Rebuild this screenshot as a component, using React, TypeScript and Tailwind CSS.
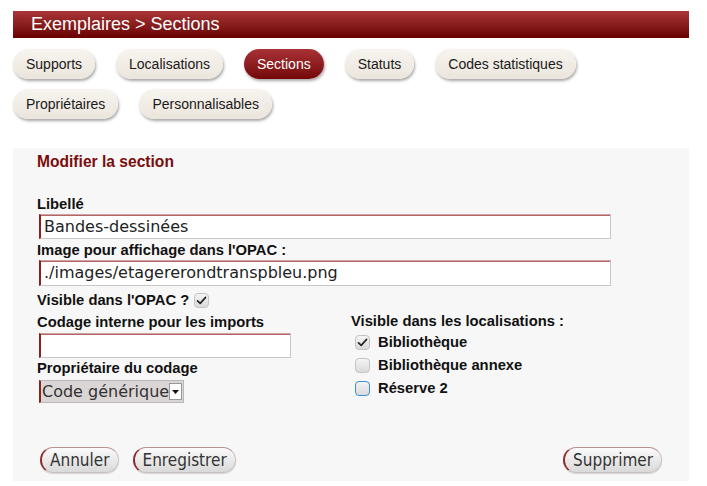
import React from "react";

const tabBase =
  "h-[30px] px-[13px] rounded-full text-[14px] leading-[30px] whitespace-nowrap shadow-[1px_2px_3px_rgba(0,0,0,0.35)]";
const tabIdle = tabBase + " bg-gradient-to-b from-[#f7f4ef] to-[#ebe5dc] text-[#1a1a1a]";
const tabActive = tabBase + " bg-gradient-to-b from-[#a83236] to-[#740606] text-white";

const label = "text-[14.75px] leading-[17px] font-bold text-[#111]";

function Check() {
  return (
    <svg width="11" height="9" viewBox="0 0 11 9" className="block">
      <path d="M1.5 4.8 L4.2 7.4 L9.6 1.4" fill="none" stroke="#222" strokeWidth="1.6" strokeLinecap="round" strokeLinejoin="round" />
    </svg>
  );
}

function Box({ checked, focus }: { checked?: boolean; focus?: boolean }) {
  return (
    <div
      className={
        "w-[15px] h-[15px] rounded-[4px] flex items-center justify-center bg-gradient-to-b from-[#f4f4f4] to-[#dadada] " +
        (focus ? "border border-[#3d8fd6]" : "border border-[#c4c4c4]")
      }
    >
      {checked ? <Check /> : null}
    </div>
  );
}

const inputCls =
  "h-[25px] bg-white border border-[#cbc7c7] border-t-[#c8a4a4] border-l-2 border-l-[#8a2222] shadow-[inset_0_1px_0_#b86464] pl-[3px] text-[16px] leading-[24px] text-[#222] font-['DejaVu_Sans',sans-serif]";

const btnCls =
  "h-[26px] px-[8px] rounded-full bg-gradient-to-b from-[#fbfbfb] to-[#d9d9d9] border border-[#c9c0c0] border-t-[#b99292] border-l-2 border-l-[#8e2a2a] text-[17px] leading-[22px] text-[#333] font-['DejaVu_Sans_Condensed','DejaVu_Sans',sans-serif] shadow-[0_1px_1px_rgba(0,0,0,0.15)]";

export default function App() {
  return (
    <div className="w-[707px] h-[486px] bg-white font-['Liberation_Sans',Arial,sans-serif] pt-[11px] px-[13px] pr-[18px]">
      <div className="h-[27px] bg-gradient-to-b from-[#aa3538] to-[#690000] text-white text-[18px] leading-[27px] pl-[18px]">
        Exemplaires &gt; Sections
      </div>

      <div className="mt-[11px] flex gap-[21px]">
        <div className={tabIdle}>Supports</div>
        <div className={tabIdle}>Localisations</div>
        <div className={tabActive}>Sections</div>
        <div className={tabIdle}>Statuts</div>
        <div className={tabIdle}>Codes statistiques</div>
      </div>
      <div className="mt-[10px] flex gap-[21px]">
        <div className={tabIdle}>Propriétaires</div>
        <div className={tabIdle}>Personnalisables</div>
      </div>

      <div className="mt-[29px] bg-[#f7f7f7] h-[333px] pl-[24px] pr-[27px] pt-[5px]">
        <div className="text-[15.6px] leading-[18px] font-bold text-[#7b0c0c]">Modifier la section</div>

        <div className={"mt-[25px] " + label}>Libellé</div>
        <div className={inputCls + " ml-[2px] mt-[1px] w-[572px]"}>Bandes-dessinées</div>

        <div className={"mt-[3px] " + label}>Image pour affichage dans l'OPAC :</div>
        <div className={inputCls + " ml-[2px] mt-[1px] w-[572px] h-[26px]"}>./images/etagererondtranspbleu.png</div>

        <div className="mt-[6px] flex items-center gap-[5px] h-[16px]">
          <span className={label}>Visible dans l'OPAC ?</span>
          <Box checked />
        </div>

        <div className="flex">
          <div className="w-[314px]">
            <div className={"mt-[6px] " + label}>Codage interne pour les imports</div>
            <div className={inputCls + " ml-[2px] w-[252px] mt-[2px]"}></div>
            <div className={"mt-[2px] " + label}>Propriétaire du codage</div>
            <div className="ml-[2px] mt-[3px] w-[145px] h-[23px] flex items-center bg-[#dad6d6] border border-[#bdb8b8] border-l-2 border-l-[#8a2222]">
              <span className="flex-1 pl-[1px] text-[16px] leading-[20px] text-[#333] font-['DejaVu_Sans',sans-serif] whitespace-nowrap overflow-hidden">
                Code générique
              </span>
              <span className="w-[13px] h-[17px] mr-[1px] bg-white border border-[#999] flex items-center justify-center">
                <svg width="7" height="4" viewBox="0 0 7 4"><path d="M0 0 L7 0 L3.5 4 Z" fill="#111" /></svg>
              </span>
            </div>
          </div>
          <div>
            <div className={"mt-[5px] " + label}>Visible dans les localisations :</div>
            <div className="mt-[4px] ml-[4px] flex flex-col gap-[7px]">
              <div className="flex items-center gap-[8px] h-[16px]">
                <Box checked />
                <span className={label}>Bibliothèque</span>
              </div>
              <div className="flex items-center gap-[8px] h-[16px]">
                <Box />
                <span className={label}>Bibliothèque annexe</span>
              </div>
              <div className="flex items-center gap-[8px] h-[16px]">
                <Box focus />
                <span className={label}>Réserve 2</span>
              </div>
            </div>
          </div>
        </div>

        <div className="mt-[44px] ml-[3px] flex items-center">
          <button className={btnCls}>Annuler</button>
          <button className={btnCls + " ml-[14px]"}>Enregistrer</button>
          <div className="flex-1" />
          <button className={btnCls}>Supprimer</button>
        </div>
      </div>
    </div>
  );
}
